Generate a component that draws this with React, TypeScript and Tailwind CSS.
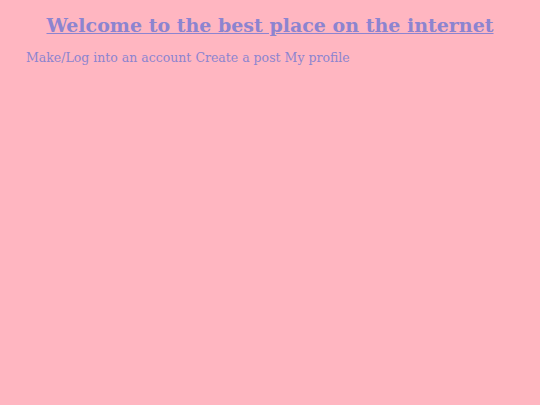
export default function App() {
  return (
    <div className="min-h-screen bg-[#ffb6c1] font-['DejaVu_Serif',serif] text-[#8c84d0]">
      <h1 className="pt-[11px] text-center text-[19px] font-bold leading-[28px]">
        <a href="#" className="underline">Welcome to the best place on the internet</a>
      </h1>
      <nav className="mt-[10px] flex gap-[4px] pl-[26px] text-[12.5px] leading-[18px]">
        <a href="#">Make/Log into an account</a>
        <a href="#">Create a post</a>
        <a href="#">My profile</a>
      </nav>
    </div>
  )
}
